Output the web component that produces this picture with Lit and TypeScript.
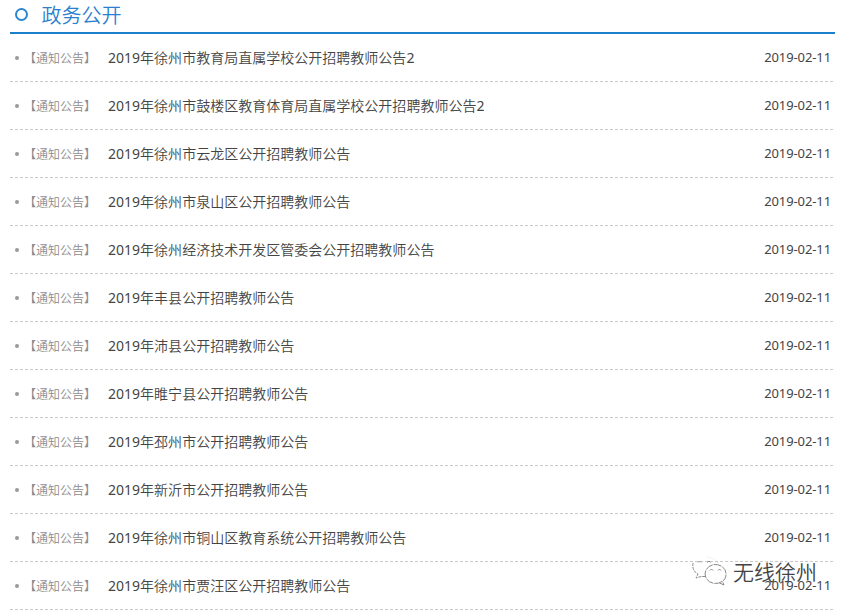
import { LitElement, html, css } from "lit";
import { customElement, state } from "lit/decorators.js";

@customElement("app-root")
export class AppRoot extends LitElement {
  @state() private titles = [
    "2019年徐州市教育局直属学校公开招聘教师公告2",
    "2019年徐州市鼓楼区教育体育局直属学校公开招聘教师公告2",
    "2019年徐州市云龙区公开招聘教师公告",
    "2019年徐州市泉山区公开招聘教师公告",
    "2019年徐州经济技术开发区管委会公开招聘教师公告",
    "2019年丰县公开招聘教师公告",
    "2019年沛县公开招聘教师公告",
    "2019年睢宁县公开招聘教师公告",
    "2019年邳州市公开招聘教师公告",
    "2019年新沂市公开招聘教师公告",
    "2019年徐州市铜山区教育系统公开招聘教师公告",
    "2019年徐州市贾汪区公开招聘教师公告",
  ];

  static styles = css`
    :host {
      display: block;
      position: relative;
      height: 610px;
      overflow: hidden;
      box-sizing: border-box;
      padding: 0 9px 0 10px;
      background: #fff;
      color: #444;
      font-family: "Noto Sans", "Noto Sans CJK SC", sans-serif;
    }
    .head {
      display: flex;
      align-items: center;
      height: 32px;
      border-bottom: 2px solid #1b7fcc;
    }
    .ring {
      box-sizing: border-box;
      width: 13px;
      height: 13px;
      margin: 0 13.5px 3px 5px;
      border: 2px solid #2b86d3;
      border-radius: 50%;
    }
    h2 {
      margin: 0 0 3px;
      font-size: 20px;
      font-weight: 350;
      line-height: 28px;
      color: #2b7fce;
      font-family: "Noto Sans CJK SC", sans-serif;
    }
    ul {
      margin: 0;
      padding: 0;
      list-style: none;
    }
    li {
      display: flex;
      align-items: center;
      box-sizing: border-box;
      height: 48px;
      padding: 0 4px 0 5px;
      line-height: 20px;
      background: repeating-linear-gradient(90deg, #c8c8c8 0 3px, #fff 3px 5px) 0 100% / 100% 1px no-repeat;
    }
    .dot {
      width: 4px;
      height: 4px;
      border-radius: 50%;
      background: #999;
    }
    .tag {
      width: 84px;
      margin-left: 5px;
      font-size: 12px;
      color: #8c8c8c;
      white-space: nowrap;
      font-family: "Noto Sans CJK SC", sans-serif;
      font-weight: 350;
    }
    .title {
      flex: 1;
      font-size: 14px;
      font-weight: 350;
      letter-spacing: 0.015px;
      white-space: nowrap;
    }
    .num {
      font-weight: 400;
    }
    time {
      padding-bottom: 2px;
      font-size: 13px;
      letter-spacing: -0.1px;
    }
    .mark {
      position: absolute;
      left: 692px;
      top: 555px;
      display: flex;
      align-items: center;
      height: 34px;
      font-size: 21px;
      font-weight: 350;
      color: #444;
      white-space: nowrap;
      font-family: "Noto Sans CJK SC", sans-serif;
    }
    .mark svg {
      width: 36px;
      height: 34px;
      margin-right: 5px;
    }
    .mark span {
      padding-bottom: 2px;
      text-shadow: -1px -1px 0 #fff;
    }
  `;

  render() {
    return html`
      <header class="head"><span class="ring"></span><h2>政务公开</h2></header>
      <ul>
        ${this.titles.map(
          (t) => html`<li>
            <span class="dot"></span><span class="tag">【通知公告】</span>
            <span class="title">${t.split(/(\d+)/).map((s) => (/\d/.test(s) ? html`<span class="num">${s}</span>` : s))}</span>
            <time>2019-02-11</time>
          </li>`
        )}
      </ul>
      <div class="mark">
        <svg viewBox="0 0 36 34" fill="none" stroke="#888" stroke-width="1">
          <path d="M1 8C0 13 2 17 6 19L4 23L9 21.5L13 21.5" stroke-dasharray="3 1" />
          <path d="M26 8C24 4 20 2 14 2" stroke="#ddd" stroke-dasharray="1 2" />
          <path d="M6 7.5L7.5 6L9 7.5M15 7.5L17 6L18.5 7.5" />
          <path d="M30 26.5A10.5 9.5 0 1 1 34 20C34 23 32 25 30.5 26.5L32 30L27.5 28" stroke-dasharray="8 1" />
          <path d="M18 15.5L19.5 14L21 15.5M26 15.5L27.5 14L29 15.5" />
        </svg>
        <span>无线徐州</span>
      </div>
    `;
  }
}
